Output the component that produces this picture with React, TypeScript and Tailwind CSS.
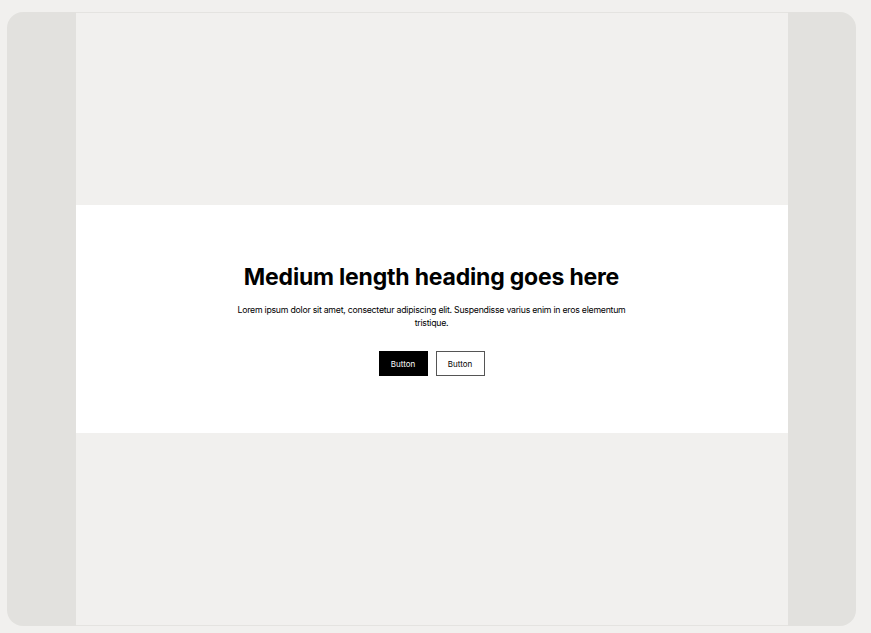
export default function App() {
  return (
    <div className="w-[871px] h-[633px] bg-[#f1f0ee] pt-[12px] px-[7px] pb-[7px]" style={{ fontFamily: "Inter, 'Liberation Sans', sans-serif" }}>
      <div className="h-[614px] w-[849px] rounded-[16px] bg-[#e2e1de] flex justify-center overflow-hidden">
        <div className="w-[712px] h-full bg-[#f1f0ee] border-y border-[#e4e3e0] flex flex-col">
          <div className="h-[192px]" />
          <div className="h-[228px] bg-white flex flex-col items-center pt-[58px]">
            <h1 className="text-[23px] font-bold leading-[28px] text-black tracking-[-0.2px]">Medium length heading goes here</h1>
            <p className="mt-[13px] w-[400px] text-center text-[8.75px] leading-[13px] text-black tracking-[-0.25px]">
              Lorem ipsum dolor sit amet, consectetur adipiscing elit. Suspendisse varius enim in eros elementum tristique.
            </p>
            <div className="mt-[21px] flex gap-[8px]">
              <button className="w-[49px] h-[25px] bg-black text-white text-[8px] border border-black">Button</button>
              <button className="w-[49px] h-[25px] bg-white text-black text-[8px] border border-[#555]">Button</button>
            </div>
          </div>
          <div className="flex-1" />
        </div>
      </div>
    </div>
  );
}
